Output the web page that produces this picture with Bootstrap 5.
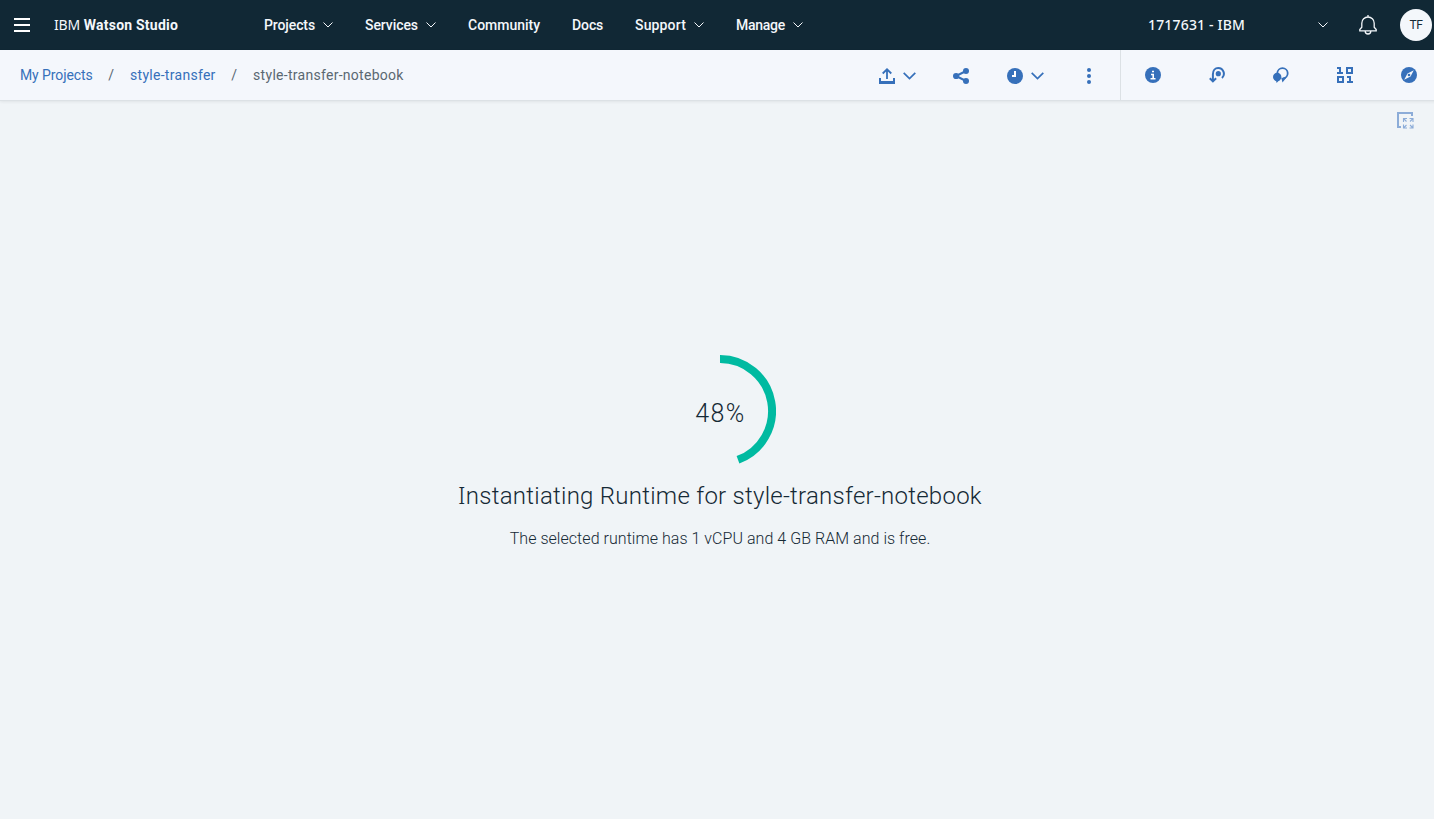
<!DOCTYPE html>
<html lang="en">
<head>
<meta charset="utf-8">
<meta name="viewport" content="width=device-width, initial-scale=1">
<title>IBM Watson Studio</title>
<link href="https://cdn.jsdelivr.net/npm/bootstrap@5.3.0/dist/css/bootstrap.min.css" rel="stylesheet">
<style>
  body { font-family: Roboto, "Noto Sans", sans-serif; font-size: 14px; line-height: 20px; background: #f0f4f7; color: #152935; min-width: 1440px; overflow: hidden; }
  svg { display: block; flex: none; }
  .plexlike { font-family: "Noto Sans", sans-serif; }
  .topbar { height: 50px; background: #112835; color: #f4f7fb; }
  .topbar a { color: inherit; }
  .menu-btn { width: 16px; margin-left: 14px; margin-right: 24px; }
  .brand { width: 210px; letter-spacing: .22px; }
  .brand .plexlike { letter-spacing: -.15px; }
  .main-nav { gap: 32px; font-weight: 500; }
  .main-nav a { gap: 8px; white-space: nowrap; }
  .w-projects { width: 51px; letter-spacing: -.1px; }
  .w-services { width: 53px; letter-spacing: -.08px; }
  .w-community { width: 72px; }
  .w-docs { width: 31px; letter-spacing: -.1px; }
  .w-support { width: 51px; letter-spacing: .15px; }
  .w-manage { width: 49px; letter-spacing: -.27px; }
  .account { width: 180px; margin-right: 31px; letter-spacing: .17px; font-weight: 500; }
  .avatar { width: 32px; height: 32px; background: #f4f7fb; color: #152935; font-size: 12px; margin-left: 23px; margin-right: 8px; letter-spacing: -.3px; }
  .toolbar { height: 51px; background: #f4f7fc; border-bottom: 1px solid #dce1e5; box-shadow: 0 1px 3px rgba(0,0,0,.07); }
  .toolbar, .toolbar a { color: #3670ba; }
  .crumbs { padding-left: 20px; letter-spacing: .28px; }
  .crumbs .first { letter-spacing: -.1px; }
  .crumbs .sep { width: 37.5px; color: #5a6872; text-align: center; }
  .crumbs .here { color: #5a6872; }
  .tools { padding-top: 2px; padding-right: 31px; }
  .side-tools { border-left: 1px solid #dce1e5; width: 320px; gap: 48px; padding-left: 24px; }
  .stage { height: 718px; }
  .expand { right: 26px; top: 11px; }
  .loader { padding-top: 254px; }
  .ring { width: 112px; height: 112px; }
  .pct { font-size: 25px; font-weight: 300; letter-spacing: 1.4px; padding-top: 6px; padding-left: 1px; }
  .headline { font-size: 24px; line-height: 30px; font-weight: 300; letter-spacing: .26px; margin: 13px 0 0; }
  .subline { font-size: 16px; line-height: 24px; font-weight: 300; letter-spacing: .045px; margin: 16px 0 0; }
</style>
<script src="https://cdn.jsdelivr.net/npm/bootstrap@5.3.0/dist/js/bootstrap.bundle.min.js"></script>
</head>
<body>
<svg width="0" height="0" class="position-absolute" aria-hidden="true">
  <symbol id="chev" viewBox="0 0 10 6"><path d="M.5.5 5 5 9.500.5" fill="none" stroke="currentColor"/></symbol>
  <symbol id="chev-lg" viewBox="0 0 13 8"><path d="M.7.8 6.500 6.600 12.300.8" fill="none" stroke="currentColor" stroke-width="1.7"/></symbol>
</svg>

<header class="topbar d-flex align-items-center">
  <a href="#" class="menu-btn" aria-label="Menu"><svg width="16" height="14" viewBox="0 0 16 14"><path d="M0 1h16M0 7h16M0 13h16" stroke="#fff" stroke-width="2"/></svg></a>
  <a href="#" class="brand text-decoration-none"><span class="plexlike">IBM</span> <b>Watson Studio</b></a>
  <nav class="main-nav d-flex">
    <a href="#" class="d-flex align-items-center text-decoration-none"><span class="w-projects">Projects</span><svg width="10" height="6"><use href="#chev"/></svg></a>
    <a href="#" class="d-flex align-items-center text-decoration-none"><span class="w-services">Services</span><svg width="10" height="6"><use href="#chev"/></svg></a>
    <a href="#" class="text-decoration-none w-community">Community</a>
    <a href="#" class="text-decoration-none w-docs">Docs</a>
    <a href="#" class="d-flex align-items-center text-decoration-none"><span class="w-support">Support</span><svg width="10" height="6"><use href="#chev"/></svg></a>
    <a href="#" class="d-flex align-items-center text-decoration-none"><span class="w-manage">Manage</span><svg width="10" height="6"><use href="#chev"/></svg></a>
  </nav>
  <div class="account plexlike d-flex align-items-center justify-content-between ms-auto"><span>1717631 - IBM</span><svg width="10" height="6"><use href="#chev"/></svg></div>
  <svg width="18" height="20" viewBox="0 0 18 20" fill="none" stroke="#f4f7fb" stroke-width="1.3"><path d="M9 0v2M.8 15.800v-1.200l2-2.400V8.200a6.200 6.200 0 0 1 12.400 0v4l2 2.400v1.200zM6.200 16.200a2.800 2.800 0 0 0 5.600 0"/></svg>
  <span class="avatar rounded-circle d-flex align-items-center justify-content-center">TF</span>
</header>

<div class="toolbar d-flex position-relative">
  <nav class="crumbs d-flex align-items-center">
    <a href="#" class="first text-decoration-none">My Projects</a><span class="sep">/</span>
    <a href="#" class="text-decoration-none">style-transfer</a><span class="sep">/</span>
    <span class="here">style-transfer-notebook</span>
  </nav>
  <div class="tools d-flex align-items-center ms-auto">
    <svg width="16" height="16" viewBox="0 0 16 16" fill="none" stroke="currentColor" stroke-width="2"><path d="M1 10V15h14V10"/><path d="M0 14.500h16" stroke-width="3"/><path d="M8 11V1.500M3.700 5.500 8 1.300l4.300 4.200" stroke-width="1.800"/></svg>
    <svg width="13" height="8" class="ms-2"><use href="#chev-lg"/></svg>
    <svg width="16" height="16" viewBox="0 0 16 16" fill="currentColor" style="margin-left:37px"><path d="M13 3 3 8l10 5" fill="none" stroke="currentColor" stroke-width="2"/><circle cx="13" cy="3.100" r="3"/><circle cx="3.100" cy="8" r="3.100"/><circle cx="13" cy="12.900" r="3"/></svg>
    <svg width="16" height="16" viewBox="0 0 16 16" style="margin-left:38px"><circle cx="8" cy="8" r="8" fill="currentColor"/><path d="M8 3v5H5" fill="none" stroke="#fff" stroke-width="2"/></svg>
    <svg width="13" height="8" class="ms-2"><use href="#chev-lg"/></svg>
    <svg width="4" height="16" viewBox="0 0 4 16" fill="currentColor" style="margin-left:43px;margin-right:-2px"><circle cx="2" cy="2" r="2"/><circle cx="2" cy="8" r="2"/><circle cx="2" cy="14" r="2"/></svg>
  </div>
  <div class="side-tools d-flex align-items-center">
    <svg width="16" height="16" viewBox="0 0 16 16"><circle cx="8" cy="8" r="8" fill="currentColor"/><path d="M7 4.500h2M6 7.500h2.200v4M5.500 11.800h5" stroke="#fff" stroke-width="1.600" fill="none"/></svg>
    <svg width="16" height="16" viewBox="0 0 16 16" fill="none" stroke="currentColor" stroke-width="2"><path d="M3.900 14.500V7.300C3.900 3.500 6.200 1 9.200 1a5.700 5.700 0 0 1 3.800 9.900M.8 11.300l3.100 3.100 3.200-3.100"/><circle cx="9.300" cy="6.700" r="2.600" fill="currentColor" stroke="none"/></svg>
    <svg width="16" height="16" viewBox="0 0 16 16" fill="currentColor"><path d="M4.300 6.100A5.200 5.200 0 1 1 10 11.500" fill="none" stroke="currentColor" stroke-width="1.800"/><circle cx="4.200" cy="10" r="4.200"/><path d="M2.800 12.500 3.600 16l3-3.200zM8.200 10.800l1.300 4.700 3.600-4.400z"/></svg>
    <svg width="16" height="16" viewBox="0 0 16 16" fill="none" stroke="currentColor" stroke-width="2"><path d="M0 1h3v4.500M0 6h6M10 1h5v5h-5zM1 10h5v5H1zM10 10h3v4.500M10 15h6"/></svg>
    <svg width="16" height="16" viewBox="0 0 16 16"><circle cx="8" cy="8" r="8" fill="currentColor"/><path d="M12.800 3.200 9.500 9.500l-6.300 3.300 3.300-6.300z" fill="#f4f7fb"/><circle cx="8" cy="8" r="1.300" fill="currentColor"/></svg>
  </div>
</div>

<main class="stage position-relative">
  <svg class="expand position-absolute" width="17" height="17" viewBox="0 0 17 17" fill="none" stroke="#8cacd8"><path d="M4 15H1V1h14v3" stroke-width="2"/><path d="M6.500 10V6.500H10M7 7l2.500 2.500M12.500 6.500H16V10M15.500 7 13 9.500M6.500 12.500V16H10M7 15.500 9.500 13M12.500 16H16v-3.500M15.500 15.500 13 13" stroke-width="1.100"/></svg>
  <div class="loader d-flex flex-column align-items-center">
    <div class="ring position-relative d-flex align-items-center justify-content-center">
      <svg class="position-absolute top-0 start-0" width="112" height="112" viewBox="0 0 112 112"><path d="M56 4a52 52 0 0 1 18 100.800" fill="none" stroke="#00baa1" stroke-width="8"/></svg>
      <span class="pct">48%</span>
    </div>
    <h1 class="headline"><span class="plexlike">I</span>nstantiating Runtime for style-transfer-notebook</h1>
    <p class="subline">The selected runtime has 1 vCPU and 4 GB RAM and is free.</p>
  </div>
</main>
</body>
</html>
